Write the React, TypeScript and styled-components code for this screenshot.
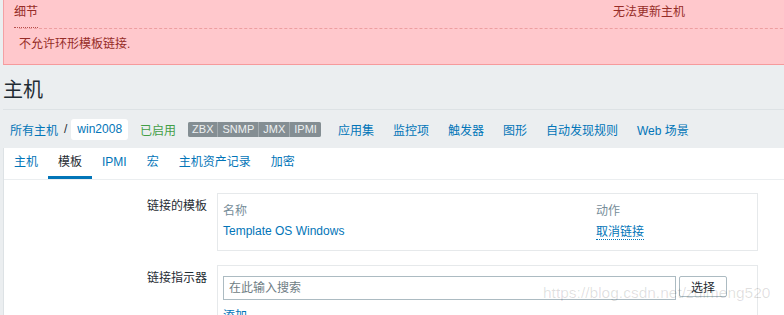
import styled, { createGlobalStyle } from 'styled-components';

const GlobalStyle = createGlobalStyle`
    html, body {
        margin: 0;
        padding: 0;
        background: #ebeef0;
        overflow: hidden;
    }
    body {
        font-family: 'Liberation Sans', Arial, 'Noto Sans CJK SC', sans-serif;
        font-size: 12px;
        color: #1f2c33;
    }
`;

const navLinks = ['应用集', '监控项', '触发器', '图形', '自动发现规则', 'Web 场景'];
const tabs = ['主机', '模板', 'IPMI', '宏', '主机资产记录', '加密'];
const badges = ['ZBX', 'SNMP', 'JMX', 'IPMI'];

export default function App() {
    return (
        <>
            <GlobalStyle />
            <Page>
                <ErrorBox>
                    <ErrorHeader>
                        <DetailsLink>细节</DetailsLink>
                        <ErrorTitle>无法更新主机</ErrorTitle>
                    </ErrorHeader>
                    <ErrorDetails>不允许环形模板链接.</ErrorDetails>
                </ErrorBox>

                <PageTitle>主机</PageTitle>

                <Breadcrumbs>
                    <Crumb>所有主机</Crumb>
                    <Separator>/</Separator>
                    <CurrentHost>win2008</CurrentHost>
                    <Status>已启用</Status>
                    <BadgeGroup>
                        {badges.map((b) => (
                            <Badge key={b}>{b}</Badge>
                        ))}
                    </BadgeGroup>
                    <NavList>
                        {navLinks.map((l) => (
                            <Crumb key={l}>{l}</Crumb>
                        ))}
                    </NavList>
                </Breadcrumbs>

                <Panel>
                    <TabList>
                        {tabs.map((t) => (
                            <Tab key={t} $active={t === '模板'}>
                                {t}
                            </Tab>
                        ))}
                    </TabList>

                    <Form>
                        <FieldLabel>链接的模板</FieldLabel>
                        <FieldBox>
                            <LinkedTable>
                                <HeadCell>名称</HeadCell>
                                <HeadCell>动作</HeadCell>
                                <Crumb>Template OS Windows</Crumb>
                                <div>
                                    <DottedLink>取消链接</DottedLink>
                                </div>
                            </LinkedTable>
                        </FieldBox>

                        <FieldLabel>链接指示器</FieldLabel>
                        <FieldBox>
                            <SearchRow>
                                <SearchInput placeholder="在此输入搜索" />
                                <SelectButton>选择</SelectButton>
                            </SearchRow>
                            <AddLink>添加</AddLink>
                        </FieldBox>
                    </Form>

                    <Watermark>https://blog.csdn.net/zuimeng520</Watermark>
                </Panel>
            </Page>
        </>
    );
}

const Page = styled.div`
    padding-left: 3px;
    width: 900px;
`;

const ErrorBox = styled.div`
    box-sizing: border-box;
    height: 65px;
    background: #ffc8cc;
    border-left: 1px solid #f4a0a4;
    border-bottom: 1px solid #f69a9c;
    padding-left: 10px;
    color: #962c27;
`;

const ErrorHeader = styled.div`
    display: grid;
    grid-template-columns: 599px auto;
    height: 28px;
    padding-top: 5px;
    box-sizing: border-box;
    line-height: 14px;
`;

const DetailsLink = styled.span`
    justify-self: start;
    border-bottom: 1px dotted #b6504c;
    line-height: 14px;
`;

const ErrorTitle = styled.span``;

const ErrorDetails = styled.div`
    margin-left: 5px;
    border-top: 1px dashed #ee9ea0;
    padding-top: 8px;
    line-height: 14px;
`;

const PageTitle = styled.h1`
    margin: 0;
    box-sizing: border-box;
    height: 45px;
    padding-top: 13px;
    font-size: 20px;
    line-height: 24px;
    font-weight: normal;
    border-bottom: 1px solid #dde2e5;
`;

const Breadcrumbs = styled.div`
    display: flex;
    align-items: center;
    height: 38px;
    padding-left: 7px;
`;

const Crumb = styled.span`
    color: #0275b8;
    white-space: nowrap;
`;

const Separator = styled.span`
    margin: 0 4px 0 6px;
    color: #1f2c33;
`;

const CurrentHost = styled.span`
    background: #fff;
    border-radius: 3px;
    height: 21px;
    line-height: 21px;
    padding: 0 6px;
    color: #0275b8;
`;

const Status = styled.span`
    margin-left: 12px;
    color: #429e47;
`;

const BadgeGroup = styled.span`
    display: flex;
    margin-left: 12px;
    gap: 1px;
    background: #a3abaf;
    border-radius: 2px;
    overflow: hidden;
`;

const Badge = styled.span`
    background: #848e93;
    color: #edf0f1;
    font-size: 11px;
    line-height: 15px;
    padding: 0 4px;
`;

const NavList = styled.span`
    display: flex;
    gap: 19px;
    margin-left: 17px;
`;

const Panel = styled.div`
    position: relative;
    height: 200px;
    background: #fff;
    border-left: 1px solid #dde2e5;
`;

const TabList = styled.div`
    display: flex;
    height: 32px;
    box-sizing: border-box;
    border-bottom: 1px solid #ebeef0;
`;

const Tab = styled.span<{ $active: boolean }>`
    padding: 0 10px;
    height: 31px;
    box-sizing: border-box;
    line-height: 29px;
    border-bottom: 3px solid ${({ $active }) => ($active ? '#0275b8' : 'transparent')};
    color: ${({ $active }) => ($active ? '#1f2c33' : '#0275b8')};
`;

const Form = styled.div`
    display: grid;
    grid-template-columns: 203px 541px;
    column-gap: 10px;
    row-gap: 14px;
    margin-top: 13px;
`;

const FieldLabel = styled.div`
    text-align: right;
    padding-top: 6px;
    line-height: 14px;
`;

const FieldBox = styled.div`
    box-sizing: border-box;
    border: 1px solid #e6e9eb;
    padding: 5px 5px 9px;
`;

const LinkedTable = styled.div`
    display: grid;
    grid-template-columns: 373px auto;
    grid-template-rows: 21px 21px;
    align-items: center;
`;

const HeadCell = styled.span`
    color: #768d99;
`;

const DottedLink = styled.span`
    color: #0275b8;
    border-bottom: 1px dotted #0275b8;
`;

const SearchRow = styled.div`
    display: flex;
    align-items: flex-start;
    gap: 3px;
    margin-top: 5px;
`;

const SearchInput = styled.input`
    box-sizing: border-box;
    width: 453px;
    height: 24px;
    border: 1px solid #acbbc2;
    padding: 0 5px;
    font: inherit;
    color: #1f2c33;
    outline: none;
    &::placeholder {
        color: #6f7d84;
    }
`;

const SelectButton = styled.button`
    box-sizing: border-box;
    width: 48px;
    height: 21px;
    background: #fff;
    border: 1px solid #acbbc2;
    border-radius: 2px;
    font: inherit;
    color: #1f2c33;
    padding: 0;
`;

const AddLink = styled.div`
    margin-top: 9px;
    color: #0275b8;
    line-height: 14px;
`;

const Watermark = styled.div`
    position: absolute;
    left: 539px;
    top: 136px;
    font-size: 15.5px;
    color: rgba(0, 0, 0, 0.13);
    white-space: nowrap;
    pointer-events: none;
`;
